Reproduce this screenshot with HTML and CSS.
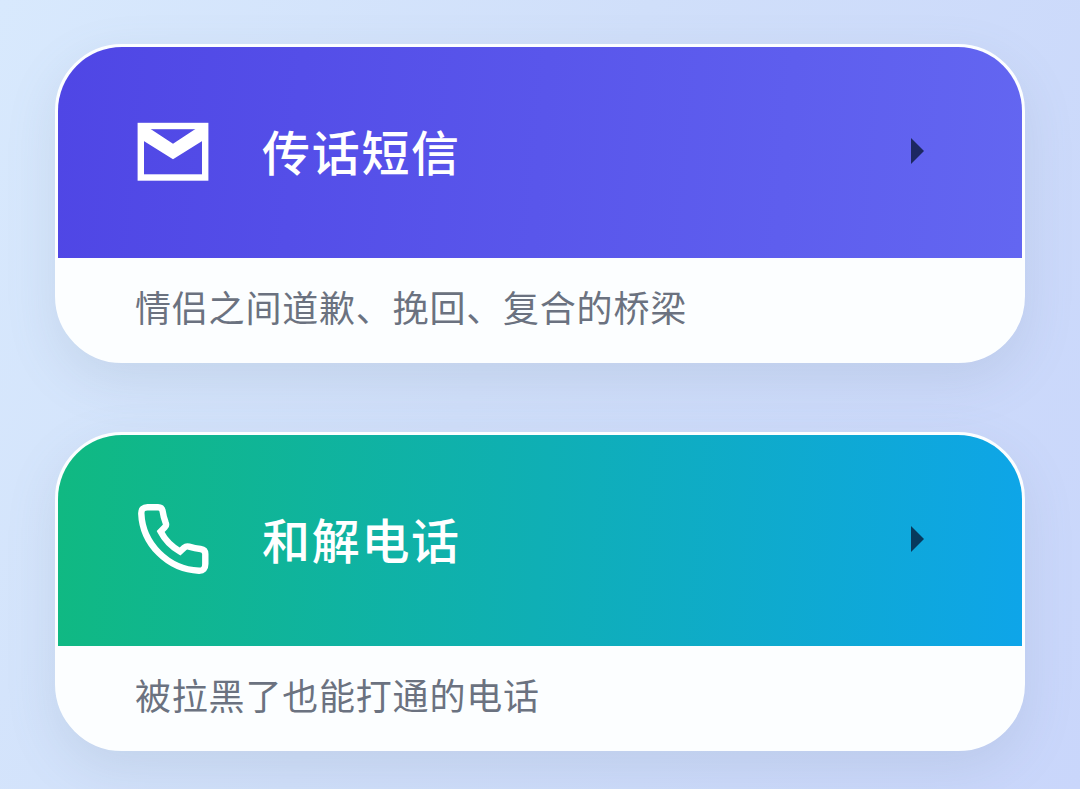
FILE: index.html
```html
<!DOCTYPE html>
<html lang="zh-CN">
<head>
    <meta charset="UTF-8">
    <meta name="viewport" content="width=device-width, initial-scale=1.0">
    <title>服务</title>
    <link rel="stylesheet" href="styles.css">
</head>
<body>
    <main class="services">
        <a class="card">
            <div class="card-header sms">
                <svg class="icon" viewBox="0 0 78 78" fill="none" stroke="#fff">
                    <rect x="6.8" y="14" width="64.4" height="51.5" stroke-width="6.4"/>
                    <path d="M9 13 H10.5 L39 31.8 L67.5 13 H69 V28.4 L39 47.3 L9 28.4 Z" fill="#fff" stroke="none"/>
                </svg>
                <h2 class="title">传话短信</h2>
                <span class="arrow"></span>
            </div>
            <p class="desc">情侣之间道歉、挽回、复合的桥梁</p>
        </a>
        <a class="card">
            <div class="card-header call">
                <svg class="icon" viewBox="0 0 78 78" fill="none" stroke="#fff" stroke-width="6.4">
                    <path d="M13.5 7.2 H24 Q28 7.2 28.6 11 C29.2 15 30 18.5 31.6 22.5 Q32.8 25.3 31 27 L26.6 31.5 Q33 44 46 51.5 L50.2 47.6 Q52.3 45.8 55 46.6 Q61 48.5 66.5 49 Q71.3 49.7 71.3 54 V64 Q71.3 71 65 70.8 C34 69.5 8.5 44 7.3 13.5 Q7.2 7.2 13.5 7.2 Z"/>
                </svg>
                <h2 class="title">和解电话</h2>
                <span class="arrow"></span>
            </div>
            <p class="desc">被拉黑了也能打通的电话</p>
        </a>
    </main>
</body>
</html>
```
FILE: styles.css
```css
* {
    box-sizing: border-box;
}
body {
    margin: 0;
    height: 789px;
    overflow: hidden;
    font-family: "Noto Sans CJK SC", sans-serif;
    background: linear-gradient(115deg, #d8e9fd 0%, #d0dffa 45%, #c9d6fb 100%);
}
.services {
    display: flex;
    flex-direction: column;
    gap: 69px;
    padding: 44px 55px 0;
}
.card {
    display: block;
    height: 319px;
    border: 3px solid #fcfeff;
    border-radius: 67px;
    overflow: hidden;
    background: #fcfeff;
    box-shadow: 0 18px 50px rgba(110, 125, 150, 0.15);
}
.card-header {
    display: flex;
    align-items: center;
    height: 211px;
    padding: 0 98px 4px 76px;
}
.sms {
    background: linear-gradient(95deg, #4f46e5, #6366f1);
}
.call {
    background: linear-gradient(95deg, #10b981, #0ea5e9);
}
.icon {
    width: 78px;
    height: 78px;
    margin-right: 50px;
}
.title {
    flex: 1;
    margin: 0;
    padding-bottom: 2px;
    font-size: 48px;
    font-weight: 500;
    letter-spacing: 1.7px;
    color: #fff;
}
.arrow {
    border-left: 13px solid rgba(5, 20, 50, 0.75);
    border-top: 13px solid transparent;
    border-bottom: 13px solid transparent;
}
.desc {
    margin: 0;
    padding: 22px 77px;
    font-size: 36px;
    line-height: 53px;
    letter-spacing: 0.8px;
    color: #6b7280;
}
```
